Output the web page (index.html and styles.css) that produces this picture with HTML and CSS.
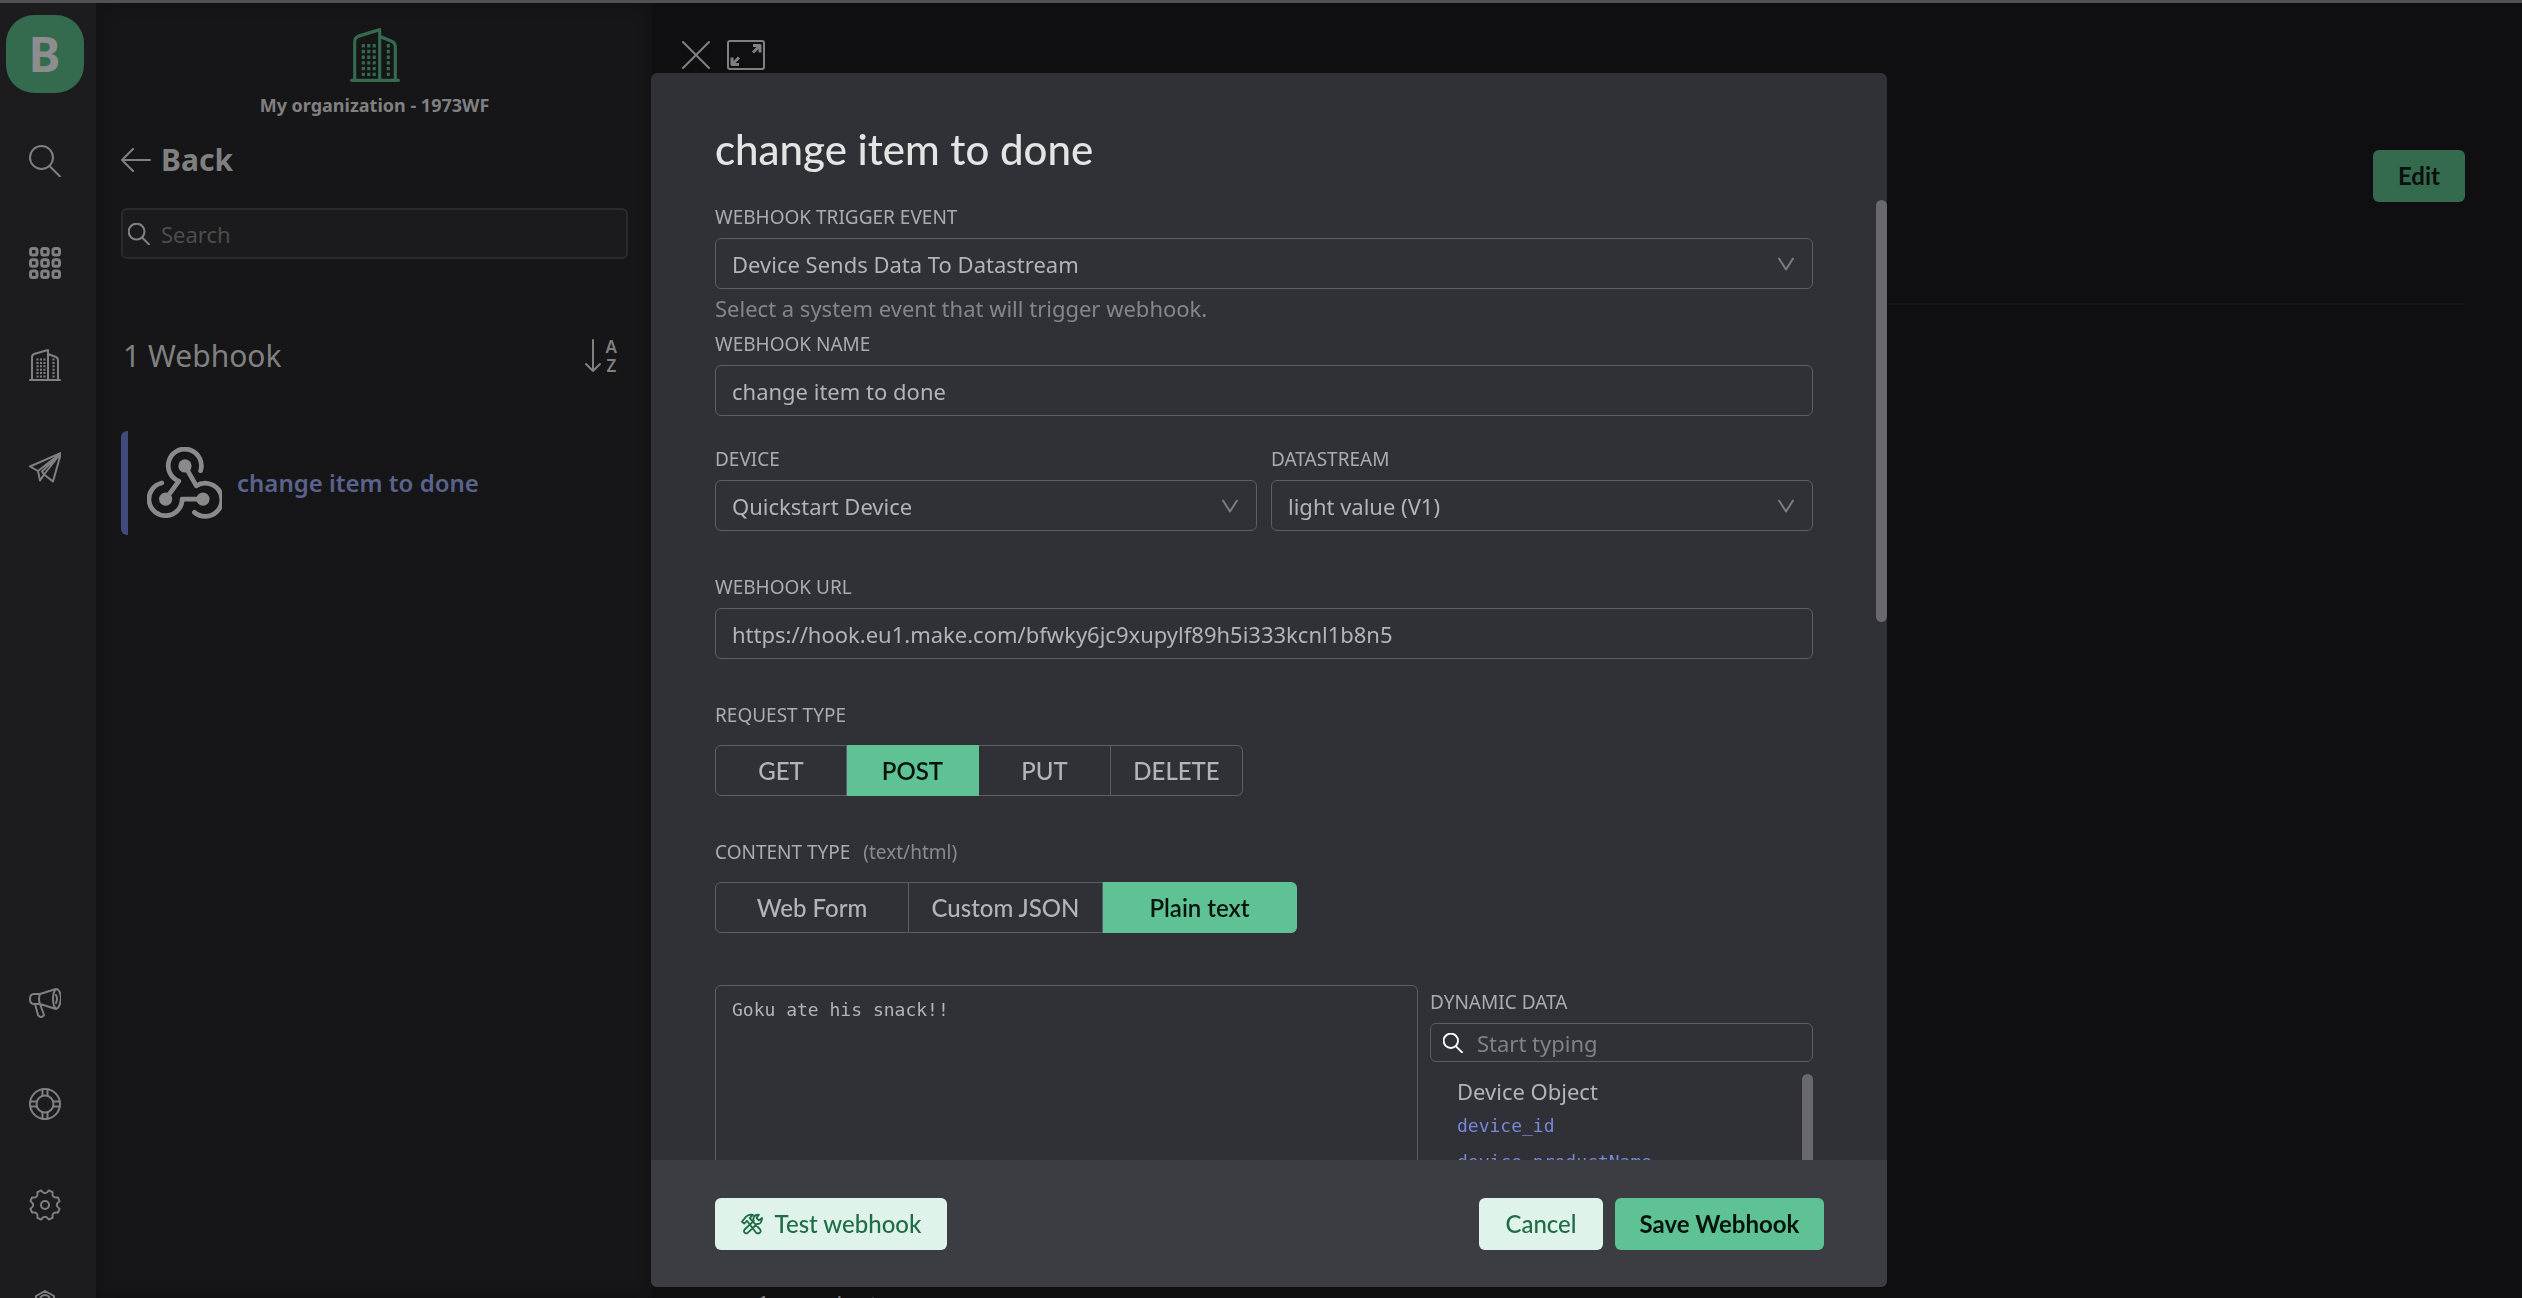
FILE: index.html
```html
<!DOCTYPE html>
<html lang="en">
<head>
<meta charset="utf-8">
<title>Webhooks</title>
<meta name="viewport" content="width=device-width, initial-scale=1">
<link rel="stylesheet" href="styles.css">
</head>
<body>
<svg class="defs" aria-hidden="true">
  <symbol id="i-search" viewBox="0 0 32 32"><circle cx="12.5" cy="12.5" r="11.5"/><path d="M20.5 21 31 31.500"/></symbol>
  <symbol id="i-building" viewBox="0 0 32 32"><path d="M1 31h30M3 31V8q0-2 2-3l14-4v30M19 5l8 3q2 1 2 3v20"/><path class="windows" d="M8.500 9.500v19M12 9.500v19M15.500 9.500v19M24.500 9.500v19"/></symbol>
  <symbol id="i-chevron" viewBox="0 0 16 14"><path d="M1 1.500 8 12.500l7-11"/></symbol>
</svg>

<div class="app">
  <nav class="rail" aria-label="Primary">
    <a class="logo" href="#">B</a>
    <a href="#" aria-label="Search"><svg class="icon"><use href="#i-search"/></svg></a>
    <a href="#" aria-label="Templates"><svg class="icon thick" viewBox="0 0 32 32"><rect x="1.500" y="1.500" width="6.500" height="6.500" rx="2"/><rect x="12.700" y="1.500" width="6.500" height="6.500" rx="2"/><rect x="24" y="1.500" width="6.500" height="6.500" rx="2"/><rect x="1.500" y="12.700" width="6.500" height="6.500" rx="2"/><rect x="12.700" y="12.700" width="6.500" height="6.500" rx="2"/><rect x="24" y="12.700" width="6.500" height="6.500" rx="2"/><rect x="1.500" y="24" width="6.500" height="6.500" rx="2"/><rect x="12.700" y="24" width="6.500" height="6.500" rx="2"/><rect x="24" y="24" width="6.500" height="6.500" rx="2"/></svg></a>
    <a href="#" aria-label="Organization"><svg class="icon"><use href="#i-building"/></svg></a>
    <a href="#" aria-label="Send"><svg class="icon" viewBox="0 0 32 32"><path d="M32 2 1 15.500l8 4.500zM32 2 9 20l2 9.500 4-6zM32 2 15 23.500l9 7zM32 2 13 20.500l2 3"/></svg></a>
    <div class="rail-bottom">
      <a href="#" aria-label="News"><svg class="icon" viewBox="0 0 32 32"><path d="M11 7 27 2q4 0 5 9-1 10-5 11l-16-5M11 7H5q-4 0-4 5t4 5h6q-2-5 0-10zM27 2q-3 3-3 10t3 10M27 8q2 4 0 8M6 17l3 11q1 2 3 2t3-2l-4-11"/></svg></a>
      <a href="#" aria-label="Help"><svg class="icon" viewBox="0 0 32 32"><circle cx="16" cy="16" r="15"/><circle cx="16" cy="16" r="8.500"/><path d="M13.500 1.500v6.500M18.500 1.500v6.500M13.500 24v6.500M18.500 24v6.500M1.500 13.500h6.500M1.500 18.500h6.500M24 13.500h6.500M24 18.500h6.500"/></svg></a>
      <a href="#" aria-label="Settings"><svg class="icon" viewBox="0 0 32 32"><path d="M12.240 1.480Q16 7 19.760 1.480L23.610 3.080Q22.500 9.500 28.920 8.390L30.520 12.240Q25 16 30.520 19.760L28.920 23.610Q22.500 22.500 23.610 28.920L19.760 30.520Q16 25 12.240 30.520L8.390 28.920Q9.500 22.500 3.080 23.610L1.480 19.760Q7 16 1.480 12.240L3.080 8.390Q9.500 9.500 8.390 3.080Z"/><circle cx="16" cy="16" r="4"/></svg></a>
      <a href="#" aria-label="Developer"><svg class="icon" viewBox="0 0 32 32"><path d="M16 1 25 6v9l-9 5-9-5V6z"/><circle cx="16" cy="10" r="5"/></svg></a>
    </div>
  </nav>

  <aside class="sidebar">
    <div class="org">
      <svg class="org-icon" viewBox="0 0 32 32" preserveAspectRatio="none"><use href="#i-building"/></svg>
      <span>My organization - 1973WF</span>
    </div>
    <a class="back" href="#"><svg viewBox="0 0 30 24"><path d="M1 12h28M12 1 1 12l11 11"/></svg>Back</a>
    <label class="search"><svg class="search-icon"><use href="#i-search"/></svg><input type="search" placeholder="Search" aria-label="Search"></label>
    <div class="list-head">
      <h2>1 Webhook</h2>
      <button class="sort" type="button" aria-label="Sort by name"><svg viewBox="0 0 16 34"><path d="M8 1v31M1 25l7 7 7-7"/></svg><span>A<br>Z</span></button>
    </div>
    <a class="hook" href="#">
      <svg viewBox="0 0 79 76"><path d="M56.500 25A17.500 17.500 0 1 0 33.500 36L19.600 55M15.500 38A17.500 17.500 0 1 0 37 55H59M40 20 52 41A17.500 17.500 0 1 1 50 69"/><circle cx="40" cy="20" r="7"/><circle cx="19.600" cy="55" r="7"/><circle cx="59" cy="55" r="7"/></svg>
      change item to done
    </a>
  </aside>

  <main class="main">
    <div class="tools">
      <button type="button" aria-label="Close"><svg class="close" viewBox="0 0 28 28"><path d="M1 1l26 26M27 1 1 27"/></svg></button>
      <button type="button" aria-label="Expand"><svg class="expand" viewBox="0 0 38 30"><rect x="1" y="1" width="36" height="28" rx="2"/><path class="arrows" d="M26 12.500l7-7M26 5.500h7v7M12 17.500l-7 7M5 17.500v7h7"/></svg></button>
    </div>
    <header class="main-head"><button class="btn edit" type="button">Edit</button></header>
    <p class="rate">1 per minute</p>
  </main>
</div>

<div class="overlay">
  <form class="modal" role="dialog" aria-labelledby="title">
    <h1 id="title">change item to done</h1>
    <div class="scroll">
      <div class="field tight">
        <label for="event">WEBHOOK TRIGGER EVENT</label>
        <div class="select"><select id="event"><option>Device Sends Data To Datastream</option></select><svg><use href="#i-chevron"/></svg></div>
        <p class="help">Select a system event that will trigger webhook.</p>
      </div>
      <div class="field name">
        <label for="name">WEBHOOK NAME</label>
        <input class="box" id="name" type="text" value="change item to done">
      </div>
      <div class="pair">
        <div class="field">
          <label for="device">DEVICE</label>
          <div class="select"><select id="device"><option>Quickstart Device</option></select><svg><use href="#i-chevron"/></svg></div>
        </div>
        <div class="field">
          <label for="stream">DATASTREAM</label>
          <div class="select"><select id="stream"><option>light value (V1)</option></select><svg><use href="#i-chevron"/></svg></div>
        </div>
      </div>
      <div class="field">
        <label for="url">WEBHOOK URL</label>
        <input class="box" id="url" type="text" value="https://hook.eu1.make.com/bfwky6jc9xupylf89h5i333kcnl1b8n5">
      </div>
      <fieldset>
        <legend>REQUEST TYPE</legend>
        <div class="segments methods">
          <label><input type="radio" name="method">GET</label>
          <label><input type="radio" name="method" checked>POST</label>
          <label><input type="radio" name="method">PUT</label>
          <label><input type="radio" name="method">DELETE</label>
        </div>
      </fieldset>
      <fieldset class="content-type">
        <legend>CONTENT TYPE <span class="hint">(text/html)</span></legend>
        <div class="segments types">
          <label><input type="radio" name="type">Web Form</label>
          <label><input type="radio" name="type">Custom JSON</label>
          <label><input type="radio" name="type" checked>Plain text</label>
        </div>
      </fieldset>
      <div class="payload">
        <textarea aria-label="Payload" spellcheck="false">Goku ate his snack!!</textarea>
        <div class="dynamic">
          <label for="dyn">DYNAMIC DATA</label>
          <div class="dyn-search"><svg class="search-icon"><use href="#i-search"/></svg><input id="dyn" type="search" placeholder="Start typing"></div>
          <div class="dyn-list">
            <div class="dyn-items">
              <h3>Device Object</h3>
              <a href="#">device_id</a>
              <a href="#">device_productName</a>
            </div>
            <div class="dyn-thumb"></div>
          </div>
        </div>
      </div>
      <div class="thumb"></div>
    </div>
    <footer>
      <button class="btn pale test" type="button"><svg viewBox="0 0 24 24"><path d="M1 9.500 5.500 4Q9 1 13 2L9.500 5.500 20.500 17.500q2 2.500 0 4t-4 0L6.500 8.500 3.500 11.500zM23 5.500l-3.500 2.500-2.500-2.500L19.500 2q-4-.5-5.500 2.500-1 2 0 4L4 18q-1.500 2 0 3.500t3.500 0L17.500 12q5 .5 5.500-6.500z"/></svg>Test webhook</button>
      <button class="btn pale cancel" type="button">Cancel</button>
      <button class="btn primary" type="submit">Save Webhook</button>
    </footer>
  </form>
</div>
</body>
</html>
```

FILE: styles.css
```css
* { box-sizing: border-box; }
:root {
  --ui: "Noto Sans", "Open Sans", sans-serif;
  --display: Lato, "Open Sans", sans-serif;
  --mono: "DejaVu Sans Mono", monospace;
  --muted: #808081;
  --line: #5d5e62;
  --green: #5fc294;
}
body {
  margin: 0;
  height: 100vh;
  overflow: hidden;
  border-top: 3px solid #505055;
  background: #0f0f11;
  color: #b4b4b6;
  font: 22px/30px var(--ui);
}
h1, h2, h3, p { margin: 0; }
a { color: inherit; text-decoration: none; }
button, input, select, textarea { margin: 0; font: inherit; color: inherit; }
button { border: 0; padding: 0; background: none; cursor: pointer; }
input, select, textarea { outline: 0; }
svg { display: block; flex: none; fill: none; stroke: currentColor; stroke-width: 2; stroke-linecap: round; stroke-linejoin: round; }
.defs { display: none; }
.windows { stroke-width: 2; stroke-dasharray: 2 1.400; stroke-linecap: butt; }

.app { display: flex; height: 100%; color: var(--muted); }

.rail {
  display: flex;
  flex-direction: column;
  align-items: center;
  gap: 70px;
  width: 96px;
  padding: 12px 7px 0 0;
  background: #1c1c1e;
}
.icon { width: 32px; height: 32px; }
.thick { stroke-width: 3; }
.logo {
  width: 78px;
  height: 78px;
  margin-bottom: -18px;
  border-radius: 28px;
  background: #346b4f;
  color: #8d8d8d;
  font: 700 48px/78px var(--ui);
  text-align: center;
}
.rail-bottom { display: flex; flex-direction: column; gap: 69px; margin: auto 0 -24px; }

.sidebar {
  width: 556px;
  padding: 25px 24px 0 25px;
  background: #161618;
  box-shadow: inset 0 0 16px #111113;
}
.org { display: flex; flex-direction: column; align-items: center; gap: 8px; font-size: 18px; font-weight: 700; }
.org-icon { width: 50px; height: 54px; color: #346b4f; }
.back { display: flex; align-items: center; gap: 10px; margin-top: 20px; font-size: 30px; font-weight: 700; line-height: 40px; }
.back svg { width: 30px; height: 24px; }
.search { display: flex; align-items: center; gap: 11px; height: 51px; margin-top: 28px; padding: 0 5px; border: 2px solid #2b2b2d; border-radius: 6px; background: #1b1b1d; }
.search-icon { width: 22px; height: 22px; stroke-width: 3; }
.search input, .dyn-search input { flex: 1; min-width: 0; padding: 0; border: 0; background: none; appearance: none; }
.search input::placeholder { color: #4c4c4f; opacity: 1; }
.list-head { display: flex; align-items: center; justify-content: space-between; margin-top: 77px; padding: 0 11px 0 2px; }
.list-head h2 { font-size: 30px; font-weight: 400; line-height: 40px; }
.sort { display: flex; align-items: center; gap: 5px; font-size: 17px; line-height: 19px; font-weight: 600; }
.sort svg { width: 16px; height: 34px; }
.hook { display: flex; align-items: center; gap: 15px; height: 104px; margin-top: 55px; padding-left: 19px; border-left: 7px solid #404d7c; border-radius: 6px 0 0 6px; color: #5b628c; font-size: 24px; font-weight: 600; }
.hook svg { width: 75px; height: 72px; color: #8a8a8a; stroke-width: 5; }
.hook circle { fill: currentColor; stroke: none; }

.main { display: flex; flex: 1; flex-direction: column; padding: 37px 57px 0 30px; }
.tools { display: flex; align-items: center; gap: 17px; height: 30px; }
.close { width: 28px; height: 28px; }
.expand { width: 38px; height: 30px; }
.expand .arrows { stroke-width: 3; stroke-linecap: butt; }
.main-head { display: flex; justify-content: flex-end; margin-top: 80px; padding-bottom: 101px; border-bottom: 2px solid #161618; }
.rate { margin: auto 0 -20px 75px; }

.btn { height: 52px; border-radius: 6px; font: 500 24px/30px var(--display); }
.edit { width: 92px; background: #346b4f; color: #0b0f0d; font-weight: 700; }
.pale { background: #e0f3ea; color: #1f6d48; }
.primary { width: 209px; background: var(--green); color: #07140e; font-weight: 700; }
.cancel { width: 124px; margin-left: auto; }
.test { display: flex; align-items: center; justify-content: center; gap: 12px; width: 232px; }
.test svg { width: 22px; height: 22px; }

.overlay { position: fixed; inset: 0; display: flex; justify-content: center; padding: 73px 0 11px 16px; }
.modal { display: flex; flex-direction: column; width: 1236px; overflow: hidden; border-radius: 6px; background: #303136; }
.modal h1 { padding: 52px 64px 27px; color: #e4e4e5; font: 500 42px/48px var(--display); }
.scroll { position: relative; flex: 1; min-height: 0; overflow: hidden; padding: 5px 74px 0 64px; }
.thumb { position: absolute; top: 0; right: 0; width: 11px; height: 422px; border-radius: 6px; background: #68686d; }

.field, fieldset { margin: 0 0 44px; padding: 0; border: 0; min-width: 0; }
.field > label, legend, .dynamic > label { display: block; padding: 0; font-size: 19px; line-height: 24px; color: #acacaf; }
.field > label { margin-bottom: 9px; }
.tight { margin-bottom: 0; }
.name { margin-bottom: 31px; }
.content-type { margin-bottom: 52px; }
.help { padding: 4px 0 9px; color: #86868a; }
.box, .select select, textarea {
  width: 100%;
  height: 51px;
  padding: 0 16px;
  border: 1px solid var(--line);
  border-radius: 6px;
  background: transparent;
}
.box { display: block; }
.select { display: grid; align-items: center; }
.select > * { grid-area: 1 / 1; }
.select select { appearance: none; }
.select svg { width: 16px; height: 14px; margin-right: 19px; justify-self: end; color: #7c7c80; pointer-events: none; }
.pair { display: grid; grid-template-columns: 1fr 1fr; gap: 14px; }

.hint { margin-left: 8px; color: #8b8b8f; }
.segments { display: grid; height: 51px; margin-top: 18px; }
.methods { grid-template-columns: repeat(4, 132px); }
.types { grid-template-columns: repeat(3, 194px); }
.segments label { display: flex; align-items: center; justify-content: center; border: 1px solid var(--line); border-left-width: 0; font: 500 24px/30px var(--display); }
.segments label:first-child { border-left-width: 1px; border-radius: 6px 0 0 6px; }
.segments label:last-child { border-radius: 0 6px 6px 0; }
.segments label:has(:checked) { border-color: var(--green); background: var(--green); color: #07140e; font-weight: 600; }
.segments input { position: absolute; opacity: 0; width: 0; height: 0; }

.payload { display: grid; grid-template-columns: 1fr 383px; gap: 12px; }
textarea { height: 320px; padding: 9px 16px; resize: none; font: 18px/30px var(--mono); }
.dynamic { padding-top: 5px; }
.dyn-search { display: flex; align-items: center; gap: 14px; height: 39px; margin-top: 9px; padding: 0 12px; border: 1px solid var(--line); border-radius: 6px; }
.dyn-search svg { color: #fff; width: 20px; height: 20px; }
.dyn-search input::placeholder { color: #828286; opacity: 1; }
.dyn-list { display: flex; justify-content: space-between; height: 240px; margin-top: 12px; }
.dyn-items { padding-left: 27px; }
.dyn-items h3 { font-size: 22px; font-weight: 400; line-height: 34px; }
.dyn-items a { display: block; color: #7788d8; font: 18px/36px var(--mono); }
.dyn-thumb { width: 11px; border-radius: 6px; background: #68686d; }

footer { position: relative; display: flex; gap: 12px; padding: 38px 63px 37px 64px; background: #3c3d43; }
```
